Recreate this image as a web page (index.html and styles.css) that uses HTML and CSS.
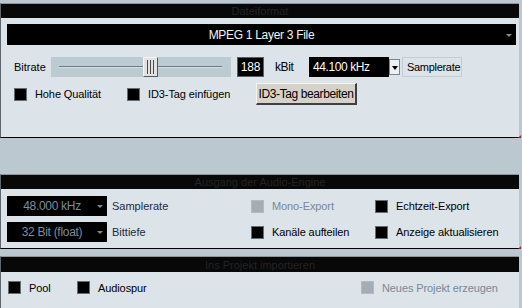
FILE: index.html
```html
<!DOCTYPE html>
<html lang="de">
<head>
    <meta charset="UTF-8">
    <link rel="stylesheet" href="styles.css">
    <title>Export</title>
</head>
<body>
    <!-- Dateiformat -->
    <div class="panel panel-format">
        <div class="panel-head">Dateiformat</div>
        <div class="panel-body">
            <div class="format-select">
                <span>MPEG 1 Layer 3 File</span>
                <i class="arrow arrow-gray"></i>
            </div>
            <div class="row bitrate-row">
                <span class="bitrate-label">Bitrate</span>
                <div class="slider">
                    <div class="slider-line"></div>
                    <div class="slider-thumb"></div>
                </div>
                <span class="value-box">188</span>
                <span class="unit">kBit</span>
                <div class="combo">
                    <span class="combo-text">44.100 kHz</span>
                    <span class="combo-btn"><i class="arrow arrow-black"></i></span>
                </div>
                <span class="label-box">Samplerate</span>
            </div>
            <div class="row check-row">
                <div class="check check-quality"><span class="box"></span>Hohe Qualität</div>
                <div class="check check-id3"><span class="box"></span>ID3-Tag einfügen</div>
                <button class="btn">ID3-Tag bearbeiten</button>
            </div>
        </div>
        <i class="grip"></i>
    </div>

    <!-- Ausgang der Audio-Engine -->
    <div class="panel panel-engine">
        <div class="panel-head">Ausgang der Audio-Engine</div>
        <div class="panel-body">
            <div class="row engine-row">
                <div class="dark-select"><span>48.000 kHz</span><i class="arrow arrow-gray"></i></div>
                <span class="engine-label">Samplerate</span>
                <div class="check check-col disabled"><span class="box"></span>Mono-Export</div>
                <div class="check"><span class="box"></span>Echtzeit-Export</div>
            </div>
            <div class="row engine-row">
                <div class="dark-select"><span>32 Bit (float)</span><i class="arrow arrow-gray"></i></div>
                <span class="engine-label">Bittiefe</span>
                <div class="check check-col"><span class="box"></span>Kanäle aufteilen</div>
                <div class="check"><span class="box"></span>Anzeige aktualisieren</div>
            </div>
        </div>
        <i class="grip"></i>
    </div>

    <!-- Ins Projekt importieren -->
    <div class="panel panel-import">
        <div class="panel-head">Ins Projekt importieren</div>
        <div class="panel-body">
            <div class="row import-row">
                <div class="check check-pool"><span class="box"></span>Pool</div>
                <div class="check check-track"><span class="box"></span>Audiospur</div>
                <div class="check disabled"><span class="box"></span>Neues Projekt erzeugen</div>
            </div>
        </div>
    </div>
</body>
</html>
```

FILE: styles.css
```css
/* General */
body {
    margin: 0;
    padding: 0;
    background-color: #bcc8d0;
    font-family: "Liberation Sans", Arial, sans-serif;
    font-size: 11px;
    letter-spacing: -0.2px;
    color: #000;
}

/* Panels */
.panel {
    position: relative;
    width: 518px;
    background-color: #dce3e9;
    border-left: 1px solid #5c666e;
    border-top: 1px solid #8c969e;
    border-bottom: 1px solid #000;
}

.panel-format {
    margin-top: 3px;
}

.panel-engine {
    margin-top: 36px;
}

.panel-import {
    margin-top: 7px;
    border-bottom: none;
}

.panel-head {
    height: 14px;
    line-height: 14px;
    background-color: #080808;
    color: #242424;
    text-align: center;
    letter-spacing: 0;
}

.panel-import .panel-head {
    height: 15px;
    line-height: 16px;
}

.panel-body {
    box-sizing: border-box;
    padding: 6px 3px 0 6px;
}

.panel-format .panel-body {
    height: 119px;
}

.panel-engine .panel-body {
    height: 59px;
    padding-top: 7px;
}

.panel-import .panel-body {
    height: 40px;
    padding: 9px 0 0 7px;
}

.row {
    display: flex;
    align-items: center;
}

/* Arrows */
.arrow {
    display: block;
    width: 0;
    height: 0;
    border-left: 3px solid transparent;
    border-right: 3px solid transparent;
}

.arrow-gray {
    border-top: 3px solid #7c8a98;
}

.arrow-black {
    border-top: 3px solid #000;
}

/* Format select */
.format-select {
    position: relative;
    height: 21px;
    width: 509px;
    background-color: #000;
    color: #f4f4f4;
    font-size: 12px;
    letter-spacing: -0.3px;
    display: flex;
    align-items: center;
    justify-content: center;
}

.format-select .arrow {
    position: absolute;
    right: 4px;
    top: 10px;
}

/* Bitrate row */
.bitrate-row {
    margin-top: 12px;
    margin-left: 7px;
    height: 20px;
}

.bitrate-label {
    width: 37px;
    letter-spacing: 0;
}

.slider {
    position: relative;
    width: 180px;
    height: 20px;
    background-color: #bccad2;
}

.slider-line {
    position: absolute;
    left: 8px;
    right: 9px;
    top: 9px;
    height: 1px;
    background-color: #6c7a86;
    border-bottom: 1px solid #d6dee4;
}

.slider-thumb {
    position: absolute;
    left: 92px;
    top: 0;
    box-sizing: border-box;
    width: 15px;
    height: 20px;
    border: 1px solid #55595c;
    border-top-color: #f4f4f4;
    border-left-color: #f4f4f4;
    background: repeating-linear-gradient(90deg, #e2e2e2 0, #e2e2e2 2px, #4a4a4a 2px, #4a4a4a 3px);
    background-color: #e2e2e2;
    background-size: 11px 14px;
    background-position: 1px 2px;
    background-repeat: no-repeat;
}

.value-box {
    margin-left: 6px;
    box-sizing: border-box;
    width: 27px;
    height: 20px;
    line-height: 19px;
    background-color: #000;
    border: 1px solid #56606a;
    color: #fff;
    text-align: center;
    font-size: 12px;
}

.unit {
    margin-left: 11px;
    width: 34px;
    font-size: 12px;
    letter-spacing: -0.4px;
}

.combo {
    display: flex;
    width: 91px;
    height: 20px;
}

.combo-text {
    width: 76px;
    padding-left: 4px;
    line-height: 20px;
    background-color: #000;
    color: #fff;
    font-size: 12px;
    letter-spacing: -0.4px;
}

.combo-btn {
    box-sizing: border-box;
    width: 11px;
    margin: 2px 0;
    background-color: #eef1f4;
    border: 1px solid #7a848c;
    display: flex;
    align-items: center;
    justify-content: center;
}

.combo-btn .arrow {
    border-top-width: 4px;
    margin-top: 1px;
}

.label-box {
    margin-left: 2px;
    box-sizing: border-box;
    width: 60px;
    height: 20px;
    line-height: 19px;
    padding-left: 4px;
    border: 1px solid #c2ced6;
    letter-spacing: -0.3px;
}

/* Checkboxes */
.check {
    display: flex;
    align-items: center;
    white-space: nowrap;
    letter-spacing: -0.1px;
}

.check .box {
    box-sizing: border-box;
    width: 13px;
    height: 13px;
    margin-right: 8px;
    background-color: #000;
    border: 1px solid #656d74;
}

.check.disabled {
    color: #7a8896;
}

.check.disabled .box {
    background-color: #a4acb4;
    border-color: #b2bac2;
}

.check-row {
    margin-top: 6px;
    margin-left: 7px;
    height: 22px;
}

.check-quality {
    width: 113px;
}

.check-id3 {
    width: 129px;
}

.btn {
    box-sizing: border-box;
    width: 101px;
    height: 22px;
    padding: 0;
    font-family: inherit;
    font-size: 12px;
    letter-spacing: -0.4px;
    background-color: #d6d2ca;
    border: 1px solid #f6f4f0;
    border-right: 2px solid #404040;
    border-bottom: 2px solid #404040;
    color: #000;
}

/* Engine rows */
.engine-row {
    height: 20px;
    margin-bottom: 6px;
}

.dark-select {
    position: relative;
    width: 100px;
    height: 20px;
    background-color: #000;
    color: #7e8c9a;
    font-size: 12px;
    letter-spacing: -0.3px;
    display: flex;
    align-items: center;
}

.dark-select span {
    width: 90px;
    text-align: center;
}

.dark-select .arrow {
    position: absolute;
    right: 4px;
    top: 9px;
}

.engine-label {
    width: 144px;
    box-sizing: border-box;
    padding-left: 5px;
    color: #1c2a3c;
    letter-spacing: 0;
}

.check-col {
    width: 124px;
}

/* Import row */
.import-row {
    height: 13px;
}

.check-pool {
    width: 69px;
}

.check-track {
    width: 284px;
}

/* Resize grip */
.grip {
    position: absolute;
    right: -2px;
    bottom: -1px;
    width: 0;
    height: 0;
    border-left: 3px solid transparent;
    border-bottom: 3px solid #b02020;
}
```
